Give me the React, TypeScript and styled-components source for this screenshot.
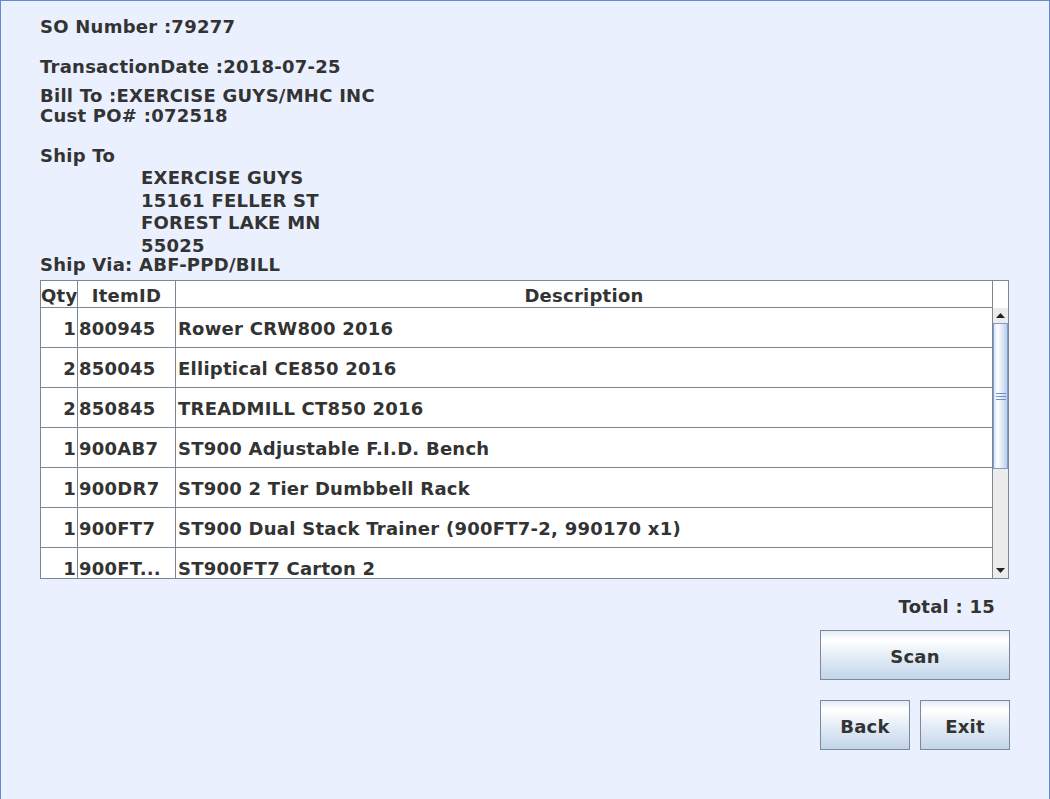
import React from 'react'
import styled, { createGlobalStyle } from 'styled-components'

const GlobalStyle = createGlobalStyle`
  html, body {
    margin: 0;
    padding: 0;
    background: #eaf0fd;
  }
  * {
    box-sizing: border-box;
  }
`

const items = [
  { qty: 1, id: '800945', desc: 'Rower CRW800 2016' },
  { qty: 2, id: '850045', desc: 'Elliptical CE850 2016' },
  { qty: 2, id: '850845', desc: 'TREADMILL CT850 2016' },
  { qty: 1, id: '900AB7', desc: 'ST900 Adjustable F.I.D. Bench' },
  { qty: 1, id: '900DR7', desc: 'ST900 2 Tier Dumbbell Rack' },
  { qty: 1, id: '900FT7', desc: 'ST900 Dual Stack Trainer (900FT7-2, 990170 x1)' },
  { qty: 1, id: '900FT...', desc: 'ST900FT7 Carton 2' },
]

const App = () => {
  return (
    <>
      <GlobalStyle />
      <Window>
        <Info>
          <Line>SO Number :79277</Line>
          <Line $top={20}>TransactionDate :2018-07-25</Line>
          <Line $top={9}>Bill To :EXERCISE GUYS/MHC INC</Line>
          <Line>Cust PO# :072518</Line>
          <Line $top={20}>Ship To</Line>
          <Address>
            <div>EXERCISE GUYS</div>
            <div>15161 FELLER ST</div>
            <div>FOREST LAKE MN</div>
            <div>55025</div>
          </Address>
          <Line $top={-2}>Ship Via: ABF-PPD/BILL</Line>
        </Info>

        <Table>
          <HeadRow>
            <HeadCell $w={37}>Qty</HeadCell>
            <HeadCell $w={98}>ItemID</HeadCell>
            <HeadCell $w={817}>Description</HeadCell>
            <HeadCorner />
          </HeadRow>
          <Body>
            <Rows>
              {items.map((it, i) => (
                <Row key={i}>
                  <QtyCell>{it.qty}</QtyCell>
                  <IdCell>{it.id}</IdCell>
                  <DescCell>{it.desc}</DescCell>
                </Row>
              ))}
            </Rows>
            <ScrollBar>
              <ArrowButton>
                <svg width="9" height="5" viewBox="0 0 9 5">
                  <path d="M0 5 L4.5 0 L9 5 Z" fill="#222" />
                </svg>
              </ArrowButton>
              <Thumb>
                <Grip />
                <Grip />
                <Grip />
              </Thumb>
              <Track />
              <ArrowButton>
                <svg width="9" height="5" viewBox="0 0 9 5">
                  <path d="M0 0 L9 0 L4.5 5 Z" fill="#222" />
                </svg>
              </ArrowButton>
            </ScrollBar>
          </Body>
        </Table>

        <Footer>
          <Total>Total : 15</Total>
          <Button $w={190}>Scan</Button>
          <ButtonRow>
            <Button $w={90}>Back</Button>
            <Button $w={90}>Exit</Button>
          </ButtonRow>
        </Footer>
      </Window>
    </>
  )
}

export default App

const Window = styled.div`
  width: 1050px;
  height: 799px;
  background: #eaf0fd;
  border: 1px solid #5f8ccf;
  border-bottom: none;
  padding: 0 39px;
  font-family: "DejaVu Sans", Verdana, sans-serif;
  font-weight: 700;
  font-size: 18px;
  letter-spacing: 0.25px;
  color: #333333;
  overflow: hidden;
`

const Info = styled.div`
  padding-top: 16px;
  display: flex;
  flex-direction: column;
`

const Line = styled.div<{ $top?: number }>`
  line-height: 20px;
  height: 20px;
  white-space: nowrap;
  margin-top: ${p => p.$top ?? 0}px;
`

const Address = styled.div`
  padding-left: 101px;
  margin-top: 1px;
  line-height: 22.5px;
  white-space: nowrap;
`

const Table = styled.div`
  margin-top: 5px;
  width: 969px;
  border: 1px solid #7b8794;
  background: #ffffff;
`

const HeadRow = styled.div`
  display: flex;
  height: 27px;
`

const HeadCell = styled.div<{ $w: number }>`
  width: ${p => p.$w}px;
  height: 27px;
  border-right: 1px solid #7b8794;
  border-bottom: 1px solid #7b8794;
  text-align: center;
  line-height: 20px;
  padding-top: 5px;
  white-space: nowrap;
  overflow: hidden;
`

const HeadCorner = styled.div`
  width: 15px;
`

const Body = styled.div`
  display: flex;
  height: 270px;
`

const Rows = styled.div`
  width: 952px;
  height: 270px;
  overflow: hidden;
  border-right: 1px solid #7b8794;
`

const Row = styled.div`
  display: flex;
  flex-shrink: 0;
  height: 40px;
  border-bottom: 1px solid #7b8794;
  line-height: 41px;
  white-space: nowrap;
`

const QtyCell = styled.div`
  width: 37px;
  border-right: 1px solid #7b8794;
  text-align: right;
  padding-right: 1px;
`

const IdCell = styled.div`
  width: 98px;
  border-right: 1px solid #7b8794;
  padding-left: 1px;
  overflow: hidden;
`

const DescCell = styled.div`
  flex: 1;
  padding-left: 2px;
  overflow: hidden;
`

const ScrollBar = styled.div`
  width: 15px;
  height: 270px;
  display: flex;
  flex-direction: column;
  background: #ececec;
`

const ArrowButton = styled.div`
  height: 15px;
  display: flex;
  align-items: center;
  justify-content: center;
  background: #ececec;
`

const Thumb = styled.div`
  height: 146px;
  border: 1px solid #7c9bd2;
  background: linear-gradient(to right, #dbe6f5 0%, #ffffff 30%, #d3e0f1 75%, #bccfe8 100%);
  display: flex;
  flex-direction: column;
  align-items: center;
  justify-content: center;
  gap: 2px;
`

const Grip = styled.div`
  width: 10px;
  height: 1px;
  background: #6b8fd0;
`

const Track = styled.div`
  flex: 1;
  background: #ececec;
`

const Footer = styled.div`
  width: 970px;
  display: flex;
  flex-direction: column;
  align-items: flex-end;
`

const Total = styled.div`
  margin-top: 18px;
  margin-right: 15px;
  line-height: 20px;
`

const ButtonRow = styled.div`
  display: flex;
  gap: 10px;
  margin-top: 20px;
`

const Button = styled.div<{ $w: number }>`
  width: ${p => p.$w}px;
  height: 50px;
  border: 1px solid #7b8a99;
  background: linear-gradient(to bottom, #e4ecf6 0%, #ffffff 18%, #e6eef7 50%, #c3d5e9 100%);
  display: flex;
  align-items: center;
  justify-content: center;
  line-height: 20px;
  padding-top: 3px;

  ${Total} + & {
    margin-top: 13px;
  }
`
